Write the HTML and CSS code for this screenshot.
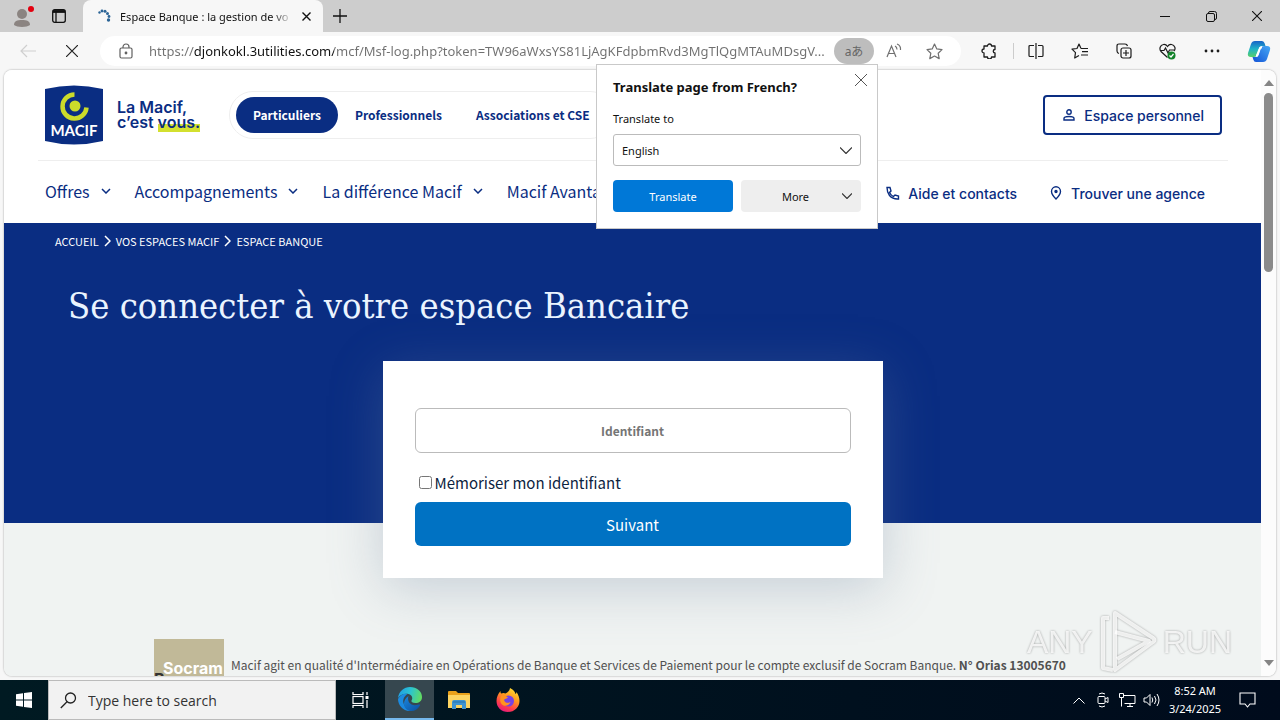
FILE: index.html
```html
<!DOCTYPE html>
<html lang="fr">
<head>
    <meta charset="utf-8">
    <title>Espace Banque : la gestion de vos comptes</title>
    <link rel="stylesheet" href="styles.css">
</head>
<body>
    <div class="browser">
        <div class="titlebar">
            <div class="tab-tools">
                <button class="icon-btn" aria-label="Profile">
                    <svg width="24" height="24" viewBox="0 0 24 24"><circle cx="10" cy="10" r="5" fill="#8b8481"/><path d="M2 21c0-4 3-5 8-5s8 1 8 5c-3 2.500-13 2.500-16 0z" fill="#8b8481"/><circle cx="19" cy="5" r="3" fill="#e3000f"/></svg>
                </button>
                <button class="icon-btn" aria-label="Tab actions">
                    <svg width="14" height="14" viewBox="0 0 14 14" fill="none" stroke="#111" stroke-width="1.300"><rect x=".7" y=".7" width="12.600" height="12.600" rx="2"/><path d="M1 3h12M4 3v10" /><path d="M1 2.300h12" stroke-width="2.500"/></svg>
                </button>
            </div>
            <div class="tab">
                <svg width="14" height="14" viewBox="0 0 14 14" fill="#2b6496"><circle cx="2.500" cy="3.500" r="1.200"/><circle cx="5" cy="2" r="1.400"/><circle cx="8" cy="2.200" r="1.500"/><circle cx="10.500" cy="4.500" r="1.500"/><circle cx="12" cy="7.500" r="1.400"/><circle cx="11.500" cy="11" r="1.700"/></svg>
                <span class="tab-title">Espace Banque : la gestion de vo</span>
                <button class="icon-btn" aria-label="Close tab">
                    <svg width="9" height="9" viewBox="0 0 9 9" stroke="#111" stroke-width="1.400"><path d="M.5.5l8 8M8.500.5l-8 8"/></svg>
                </button>
            </div>
            <button class="icon-btn new-tab" aria-label="New tab">
                <svg width="14" height="14" viewBox="0 0 14 14" stroke="#111" stroke-width="1.300"><path d="M7 0v14M0 7h14"/></svg>
            </button>
            <div class="window-controls">
                <button class="icon-btn" aria-label="Minimize"><svg width="10" height="10" viewBox="0 0 10 10" stroke="#111"><path d="M0 5.500h10"/></svg></button>
                <button class="icon-btn" aria-label="Restore"><svg width="11" height="11" viewBox="0 0 11 11" fill="none" stroke="#111"><rect x=".5" y="2.500" width="8" height="8" rx="1.500"/><path d="M2.500 2.500V2q0-1.500 1.500-1.500h4.500q2 0 2 2V7q0 1.500-1.500 1.500"/></svg></button>
                <button class="icon-btn" aria-label="Close"><svg width="10" height="10" viewBox="0 0 10 10" stroke="#111" stroke-width="1.100"><path d="M0 0l10 10M10 0L0 10"/></svg></button>
            </div>
        </div>

        <div class="toolbar">
            <button class="icon-btn nav-btn" aria-label="Back"><svg width="16" height="14" viewBox="0 0 16 14" fill="none" stroke="#cfcfcf" stroke-width="1.200"><path d="M16 7H1M7 1L1 7l6 6"/></svg></button>
            <button class="icon-btn nav-btn" aria-label="Stop"><svg width="12" height="12" viewBox="0 0 12 12" stroke="#222" stroke-width="1.200"><path d="M0 0l12 12M12 0L0 12"/></svg></button>
            <div class="address-bar">
                <svg width="14" height="16" viewBox="0 0 14 16" fill="none" stroke="#5f5f5f" stroke-width="1.200"><rect x="1" y="5" width="12" height="10" rx="1.500"/><path d="M4 5V4a3 3 0 0 1 6 0v1"/><circle cx="7" cy="10" r=".8" fill="#5f5f5f"/></svg>
                <input class="url" type="text" aria-label="Address" value="https://djonkokl.3utilities.com/mcf/Msf-log.php?token=TW96aWxsYS81LjAgKFdpbmRvd3MgTlQgMTAuMDsgV...">
                <button class="icon-btn translate-badge" aria-label="Translate">aあ</button>
                <button class="icon-btn" aria-label="Read aloud"><svg width="16" height="16" viewBox="0 0 16 16" fill="none" stroke="#707070" stroke-width="1.200"><path d="M1 14L5.500 3 10 14M2.500 10.500h6M9 3q2 1 2 3.500M11 1q4 1.500 3.500 6"/></svg></button>
                <button class="icon-btn" aria-label="Add to favorites"><svg width="17" height="17" viewBox="0 0 17 17" fill="none" stroke="#707070" stroke-width="1.200" stroke-linejoin="round"><path d="M8.500 1l2.300 4.900 5.200.7-3.800 3.700 1 5.300-4.700-2.600-4.700 2.600 1-5.300L1 6.600l5.200-.7z"/></svg></button>
            </div>
            <div class="toolbar-actions">
                <button class="icon-btn" aria-label="Extensions"><svg width="16" height="16" viewBox="0 0 16 16" fill="none" stroke="#1c1c1c" stroke-width="1.300" stroke-linejoin="round"><path d="M3 3h3.500a2 2 0 1 1 4 0H14v3.500a1.500 1.500 0 0 0 0 3.500v4h-3.500a2 2 0 0 1-4 0H3v-4a2 2 0 1 1 0-4z"/></svg></button>
                <span class="divider"></span>
                <button class="icon-btn" aria-label="Split screen"><svg width="16" height="16" viewBox="0 0 16 16" fill="none" stroke="#1c1c1c" stroke-width="1.200"><path d="M6 2.500H2q-1 0-1 1v9q0 1 1 1h4M10 2.500h4q1 0 1 1v9q0 1-1 1h-4M8 0v16"/></svg></button>
                <button class="icon-btn" aria-label="Favorites"><svg width="18" height="16" viewBox="0 0 18 16" fill="none" stroke="#1c1c1c" stroke-width="1.200" stroke-linejoin="round"><path d="M10 5.500L8 1 6 5.500l-5 .7 3.500 3.500L3.700 15 8 12.500M10 5.500h7M11 8.700h6M10 12h7"/></svg></button>
                <button class="icon-btn" aria-label="Collections"><svg width="16" height="16" viewBox="0 0 16 16" fill="none" stroke="#1c1c1c" stroke-width="1.200"><path d="M3 10.500Q1 10 1 8V3q0-2 2-2h6q2 0 2.500 2"/><rect x="5" y="5" width="10" height="10" rx="2"/><path d="M10 7v6M7 10h6"/></svg></button>
                <button class="icon-btn" aria-label="Browser essentials"><svg width="18" height="17" viewBox="0 0 18 17" fill="none" stroke="#1c1c1c" stroke-width="1.200"><path d="M8.500 14.500L2 8.500C0 6 1 2 4.500 1.500 7 1.200 8.500 3.500 8.500 3.500S10 1.200 12.500 1.500C16 2 17 6 15 8M1 7.500h4L6.500 5l2.500 5 1.500-3H16"/><circle cx="12.500" cy="12.500" r="4" fill="#13832a" stroke="none"/><path d="M10.500 12.500l1.500 1.500 2.500-3" stroke="#fff"/></svg></button>
                <button class="icon-btn" aria-label="Settings and more"><svg width="16" height="4" viewBox="0 0 16 4" fill="#1c1c1c"><circle cx="2" cy="2" r="1.400"/><circle cx="8" cy="2" r="1.400"/><circle cx="14" cy="2" r="1.400"/></svg></button>
                <button class="icon-btn" aria-label="Copilot">
                    <svg width="24" height="23" viewBox="0 0 24 23">
                        <defs>
                            <linearGradient id="cpA" x1="0" y1="0" x2="0" y2="1"><stop offset="0" stop-color="#1763c7"/><stop offset=".5" stop-color="#1fb3c8"/><stop offset="1" stop-color="#58d06a"/></linearGradient>
                            <linearGradient id="cpB" x1="1" y1="0" x2="0" y2="1"><stop offset="0" stop-color="#46a8f5"/><stop offset="1" stop-color="#1353d6"/></linearGradient>
                        </defs>
                        <path d="M8 1h7q2 0 2.700 2.500L18.500 6H15q-2 0-2.700 2L10 15q-1 2-3 2H4q-4 0-3-4L4 4q1-3 4-3z" fill="url(#cpA)"/>
                        <path d="M16 22H9q-2 0-2.700-2.500L5.500 17H9q2 0 2.700-2L14 8q1-2 3-2h3q4 0 3 4l-3 9q-1 3-4 3z" fill="url(#cpB)"/>
                        <path d="M15 7.500h-1q-1 0-1.500 1.500L10 15.500h-1" fill="none" stroke="#fff" stroke-width="2"/>
                    </svg>
                </button>
            </div>
        </div>

        <div class="viewport">
            <main class="page">
                <header class="site-header">
                    <div class="header-top">
                        <a class="brand" href="#" aria-label="Macif">
                            <svg class="brand-shape" width="60" height="60" viewBox="0 0 60 60"><path d="M1 4Q30-3 59 4v52Q30 63 1 56z" fill="#0a2d82"/><circle cx="31" cy="21" r="5.500" fill="#cbdb2a"/><path d="M30.500 9.500A12 12 0 1 0 42.500 22.500" fill="none" stroke="#cbdb2a" stroke-width="4.500"/></svg>
                            <span class="brand-name">MACIF</span>
                        </a>
                        <p class="slogan">La Macif,<br>c’est <span class="highlight">vous.</span></p>
                        <nav class="segments">
                            <a class="segment active" href="#">Particuliers</a>
                            <a class="segment" href="#">Professionnels</a>
                            <a class="segment" href="#">Associations et CSE</a>
                        </nav>
                        <a class="account" href="#">
                            <svg width="12" height="12" viewBox="0 0 12 12" fill="none" stroke="#0a2d82" stroke-width="1.400"><circle cx="6" cy="3" r="2.200"/><path d="M1 11V9.500Q1 7.500 6 7.500t5 2V11z"/></svg>
                            Espace personnel
                        </a>
                    </div>
                    <div class="header-nav">
                        <nav class="main-nav">
                            <a href="#">Offres <svg class="chevron" viewBox="0 0 10 6"><path d="M1 1l4 4 4-4"/></svg></a>
                            <a href="#">Accompagnements <svg class="chevron" viewBox="0 0 10 6"><path d="M1 1l4 4 4-4"/></svg></a>
                            <a href="#">La différence Macif <svg class="chevron" viewBox="0 0 10 6"><path d="M1 1l4 4 4-4"/></svg></a>
                            <a href="#">Macif Avantages</a>
                        </nav>
                        <div class="help-links">
                            <a href="#"><svg width="14" height="14" viewBox="0 0 14 14" fill="none" stroke="#0a2d82" stroke-width="1.400"><path d="M1 1.500h3L5 5 3.500 6.500q1.500 3 4 4L9 9l3.500 1v3Q7 13.500 3.500 9.500 1 6 1 1.500z"/></svg>Aide et contacts</a>
                            <a href="#"><svg width="14" height="14" viewBox="0 0 14 14" fill="none" stroke="#0a2d82" stroke-width="1.400"><path d="M7 13Q2.500 8.500 2.500 5.500a4.500 4.700 0 0 1 9 0Q11.500 8.500 7 13z"/><circle cx="7" cy="5.500" r="1" fill="#0a2d82"/></svg>Trouver une agence</a>
                        </div>
                    </div>
                </header>

                <section class="hero">
                    <nav class="breadcrumb" aria-label="Fil d'Ariane">
                        <a href="#">ACCUEIL</a>
                        <svg width="7" height="12" viewBox="0 0 7 12"><path d="M1 1l5 5-5 5"/></svg>
                        <a href="#">VOS ESPACES MACIF</a>
                        <svg width="7" height="12" viewBox="0 0 7 12"><path d="M1 1l5 5-5 5"/></svg>
                        <a href="#">ESPACE BANQUE</a>
                    </nav>
                    <h1>Se connecter à votre espace Bancaire</h1>
                </section>

                <div class="login-card">
                    <input class="login-id" type="text" placeholder="Identifiant" aria-label="Identifiant">
                    <label class="remember"><input type="checkbox">Mémoriser mon identifiant</label>
                    <button class="submit" type="button">Suivant</button>
                </div>

                <footer class="legal">
                    <div class="socram">Socram<br><span>Banque</span></div>
                    <p>Macif agit en qualité d'Intermédiaire en Opérations de Banque et Services de Paiement pour le compte exclusif de Socram Banque. <b>N° Orias 13005670</b></p>
                </footer>
            </main>
            <div class="scrollbar">
                <svg width="10" height="6" viewBox="0 0 10 6" fill="#858585"><path d="M0 6l5-6 5 6z"/></svg>
                <div class="track"><div class="thumb"></div></div>
                <svg width="10" height="6" viewBox="0 0 10 6" fill="#858585"><path d="M0 0l5 6 5-6z"/></svg>
            </div>
        </div>

        <div class="translate-popup" role="dialog" aria-labelledby="translateTitle">
            <div class="popup-head">
                <h2 id="translateTitle">Translate page from French?</h2>
                <button class="icon-btn" aria-label="Close"><svg width="12" height="12" viewBox="0 0 12 12" stroke="#555"><path d="M0 0l12 12M12 0L0 12"/></svg></button>
            </div>
            <label for="language">Translate to</label>
            <div class="select-wrap">
                <select id="language"><option>English</option></select>
                <svg width="12" height="7" viewBox="0 0 12 7"><path d="M0 0.500l6 6 6-6"/></svg>
            </div>
            <div class="popup-actions">
                <button class="primary">Translate</button>
                <button class="more"><span>More</span><svg width="10" height="6" viewBox="0 0 10 6"><path d="M0 .5l5 5 5-5"/></svg></button>
            </div>
        </div>

        <div class="watermark">
            <span>ANY</span>
            <svg width="58" height="64" viewBox="0 0 58 64" fill="none" stroke="#fff" stroke-opacity=".8" stroke-width="4" stroke-linejoin="round"><path d="M16 3l38 25q3 2 0 4L16 60z"/><path d="M16 22l34 9-32 18M10 8H4v50l10 2"/></svg>
            <span>RUN</span>
        </div>
    </div>

    <div class="taskbar">
        <button class="task start" aria-label="Start"><svg width="16" height="16" viewBox="0 0 16 16" fill="#fff"><path d="M0 2.300l7-1v6.200H0zM8 1.100L16 0v7.500H8zM0 8.500h7v6.200l-7-1zM8 8.500h8V16l-8-1.100z"/></svg></button>
        <div class="search">
            <svg width="17" height="17" viewBox="0 0 17 17" fill="none" stroke="#222" stroke-width="1.300"><circle cx="10.500" cy="6" r="5"/><path d="M7 9.800L.8 16"/></svg>
            <input type="text" placeholder="Type here to search" aria-label="Search">
        </div>
        <button class="task" aria-label="Task view"><svg width="17" height="16" viewBox="0 0 17 16" fill="none" stroke="#fff" stroke-width="1.200"><path d="M1 0v2.500h10V0M1 16v-2.500h10V16M15 0v3M15 8v8"/><rect x="1" y="4.500" width="10" height="7"/><path d="M15 4v3" stroke-width="3"/></svg></button>
        <button class="task current" aria-label="Microsoft Edge">
            <svg width="26" height="26" viewBox="0 0 26 26">
                <defs>
                    <linearGradient id="edTop" x1="0" y1=".3" x2="1" y2=".5"><stop offset="0" stop-color="#1f9de4"/><stop offset=".5" stop-color="#2cc4cf"/><stop offset="1" stop-color="#62dc62"/></linearGradient>
                    <linearGradient id="edLow" x1="0" y1="0" x2="1" y2="1"><stop offset="0" stop-color="#1a86dc"/><stop offset="1" stop-color="#0b4f9f"/></linearGradient>
                </defs>
                <path d="M1 12C2 5 7 1 13 1c7 0 12 4.500 12 10 0 4-3 6-6.500 6-3 0-4.500-1-4-2.500 1.500-1.500 1-5.500-3-6.500C7 7 3 9 1 12z" fill="url(#edTop)"/>
                <path d="M1 13c2-4 6-6 9.500-5-3 2-5 5-4 9 1 4 4 7 8 7.800C7 26 1 20 1 13z" fill="#1b8ae0"/>
                <path d="M11.500 10c-2 6 3 11 10 8.500 1-.3 2 .2 1.500 1-3 5-7.500 6.500-11.500 5C5 22 6 13 11.500 10z" fill="url(#edLow)"/>
            </svg>
        </button>
        <button class="task" aria-label="File Explorer"><svg width="22" height="20" viewBox="0 0 22 20"><path d="M0 2q0-1 1-1h7l2 2h11q1 0 1 1v4H0z" fill="#e9a11b"/><path d="M0 5h22v13H0z" fill="#fcd462"/><path d="M4 19v-7q0-2 2-2h10q2 0 2 2v7h-4v-4H8v4z" fill="#3f94d1"/><path d="M5 12h12" stroke="#2572ad"/></svg></button>
        <button class="task" aria-label="Firefox">
            <svg width="24" height="24" viewBox="0 0 24 24">
                <defs><linearGradient id="ff" x1=".8" y1="0" x2=".3" y2="1"><stop offset="0" stop-color="#ffe233"/><stop offset=".4" stop-color="#ff9a1f"/><stop offset=".75" stop-color="#ff3d4a"/><stop offset="1" stop-color="#e5197e"/></linearGradient></defs>
                <path d="M14 0c4 2 5 4 5.500 6 .8-.3 1-1.500 1-2 2 3 3 6 3 9 0 6-5 11-11.500 11S.5 19.500.5 13C.5 9 2 6 4.500 3c0 1 0 2 .7 2.500C7 4.500 8.500 5 9.500 5.500 12 4 13.500 3 14 0z" fill="url(#ff)"/>
                <circle cx="12.500" cy="13" r="5.500" fill="#7542e5"/>
                <path d="M5 8c3-1 5 0 7 1.500-1 1.500-3.500 1-4 2.500 1 3 4 3.500 6.500 2-1 3-4 4.500-7 3.500C4 16 3.500 12 5 8z" fill="#ff9320"/>
            </svg>
        </button>
        <div class="tray">
            <svg width="12" height="7" viewBox="0 0 12 7"><path d="M.5 6.500L6 1l5.500 5.500"/></svg>
            <svg width="12" height="16" viewBox="0 0 12 16"><rect x="1" y="4.500" width="7" height="7" rx="1"/><path d="M8 7l3-1.500v5L8 9M2 2q3-2 6 0M2 14q3 2 6 0"/></svg>
            <svg width="17" height="14" viewBox="0 0 17 14"><path d="M5 2.500h11v8H5.500M8 13.500h6M11 10.500v3M.5.5h4v4h-4zM2.500 4.500v9"/></svg>
            <svg width="17" height="14" viewBox="0 0 17 14"><path d="M1 5h2.500L7 1.500v11L3.500 9H1zM9 4.500q1.500 2.500 0 5M11.500 3q3 4 0 8M14 1q4 6 0 12"/></svg>
        </div>
        <div class="clock">8:52 AM<br>3/24/2025</div>
        <button class="task notifications" aria-label="Notifications"><svg width="17" height="16" viewBox="0 0 17 16" fill="none" stroke="#fff" stroke-width="1.100"><path d="M1 1h15v11h-5l-2.500 3L6 12H1z"/></svg></button>
    </div>
</body>
</html>
```
FILE: styles.css
```css
* {
    box-sizing: border-box;
}

body {
    margin: 0;
    height: 100vh;
    display: flex;
    flex-direction: column;
    overflow: hidden;
    font-family: "Noto Sans", "Noto Sans CJK JP", sans-serif;
    font-size: 11px;
    color: #111;
}

a {
    color: inherit;
    text-decoration: none;
}

button,
input,
select {
    font: inherit;
}

button {
    border: none;
    cursor: pointer;
}

svg {
    flex: none;
}

.icon-btn {
    background: none;
    padding: 0;
    display: flex;
    align-items: center;
    justify-content: center;
}

/* Browser window */
.browser {
    position: relative;
    flex: 1;
    min-height: 0;
    display: flex;
    flex-direction: column;
    background: #f7f7f7;
}

.titlebar {
    height: 32px;
    display: flex;
    background: #cdcdcd;
}

.tab-tools {
    width: 83px;
    display: flex;
    align-items: center;
    gap: 16px;
    padding-left: 12px;
    border-bottom-right-radius: 6px;
}

.tab {
    width: 240px;
    display: flex;
    align-items: center;
    gap: 9px;
    padding: 0 12px 0 14px;
    background: #f7f7f7;
    border-radius: 8px 8px 0 0;
}

.tab-title {
    flex: 1;
    white-space: nowrap;
    -webkit-mask-image: linear-gradient(to right, #000 88%, transparent);
    mask-image: linear-gradient(to right, #000 88%, transparent);
}

.new-tab {
    width: 34px;
}

.window-controls {
    margin-left: auto;
    display: flex;
}

.window-controls .icon-btn {
    width: 46px;
}

.toolbar {
    height: 38px;
    display: flex;
    align-items: center;
    padding: 0 9px 0 6px;
}

.nav-btn {
    width: 44px;
}

.address-bar {
    flex: 1;
    height: 30px;
    display: flex;
    align-items: center;
    gap: 24px;
    margin-left: 6px;
    padding: 0 18px 0 19px;
    background: #fff;
    border-radius: 15px;
}

.url {
    flex: 1;
    min-width: 0;
    height: 28px;
    margin: 0 -24px 0 -8px;
    padding: 0;
    border: none;
    outline: none;
    font-size: 13px;
    background: linear-gradient(to right, #707070 45px, #111 45px, #111 185px, #707070 185px);
    -webkit-background-clip: text;
    background-clip: text;
    color: transparent;
}

.translate-badge {
    width: 40px;
    height: 26px;
    margin-right: -12px;
    border-radius: 13px;
    background: #bdbdbd;
    color: #666;
    font-size: 12px;
}

.toolbar-actions {
    display: flex;
    align-items: center;
    gap: 27px;
    padding-left: 20px;
}

.toolbar-actions .divider {
    width: 1px;
    height: 16px;
    margin: 0 -13px 0 -11px;
    background: #ccc;
}

/* Page */
.viewport {
    flex: 1;
    min-height: 0;
    display: flex;
    margin: 0 4px 4px;
    overflow: hidden;
    border-radius: 8px;
    box-shadow: 0 0 2px rgba(0, 0, 0, 0.4);
    background: #fff;
}

.page {
    flex: 1;
    overflow: hidden;
    background: #f0f3f2;
    font-family: "Noto Sans CJK JP", sans-serif;
}

.site-header {
    padding: 0 33px 0 34px;
    background: #fff;
    color: #0a2d82;
}

.header-top {
    height: 91px;
    display: flex;
    align-items: center;
    padding: 0 6px;
    border-bottom: 1px solid #eee;
}

.brand {
    display: grid;
    width: 60px;
    height: 60px;
}

.brand > * {
    grid-area: 1 / 1;
}

.brand-name {
    align-self: end;
    margin-bottom: 5px;
    font: bold 15px/20px Lato, sans-serif;
    text-align: center;
    color: #fff;
}

.slogan {
    width: 112px;
    margin: 0 0 0 13px;
    font: 600 16px/15px Inter, sans-serif;
}

.highlight {
    background: linear-gradient(transparent 60%, #d3e02f 60%);
}

.segments {
    display: flex;
    align-items: center;
    height: 48px;
    padding: 0 6px;
    border: 1px solid #eee;
    border-radius: 24px;
    font-weight: bold;
    font-size: 12px;
}

.segment {
    padding: 0 17px;
    line-height: 36px;
    border-radius: 18px;
    white-space: nowrap;
}

.segment.active {
    background: #0a2d82;
    color: #fff;
}

.account {
    display: flex;
    align-items: center;
    gap: 9px;
    height: 40px;
    margin-left: auto;
    padding: 0 16px 0 18px;
    border: 2px solid #0a2d82;
    border-radius: 4px;
    font: 500 14px Inter, sans-serif;
}

.header-nav {
    height: 62px;
    display: flex;
    align-items: center;
    justify-content: space-between;
    padding: 0 23px 0 7px;
}

.main-nav {
    display: flex;
    gap: 24px;
    padding-bottom: 3px;
    font-size: 16px;
}

.main-nav a {
    display: flex;
    align-items: center;
    gap: 11px;
    white-space: nowrap;
}

.chevron {
    width: 10px;
    height: 6px;
    fill: none;
    stroke: #0a2d82;
    stroke-width: 1.500;
}

.help-links {
    display: flex;
    gap: 32px;
    padding-top: 2px;
    font: 500 14px Inter, sans-serif;
}

.help-links a {
    display: flex;
    align-items: center;
    gap: 8px;
}

.hero {
    height: 300px;
    padding: 9px 51px;
    background: #0a2d82;
    color: #fff;
}

.breadcrumb {
    display: flex;
    align-items: center;
    gap: 5px;
    font-size: 11px;
    line-height: 18px;
}

.breadcrumb svg {
    fill: none;
    stroke: #fff;
    stroke-width: 1.500;
}

h1 {
    margin: 32px 13px;
    font: 36px/48px "DejaVu Serif Condensed", "DejaVu Serif", serif;
    color: #eaf4ff;
}

.login-card {
    position: relative;
    width: 500px;
    margin: -162px auto 0;
    padding: 47px 32px 32px;
    display: flex;
    flex-direction: column;
    background: #fff;
    box-shadow: 0 10px 50px rgba(110, 130, 160, 0.32);
}

.login-id {
    height: 45px;
    border: 1px solid #bbb;
    border-radius: 6px;
    font-size: 12px;
    font-weight: bold;
    text-align: center;
}

.remember {
    display: flex;
    align-items: center;
    height: 49px;
    padding-top: 10px;
    font-size: 15px;
    color: #0c2340;
}

.remember input {
    margin: 0 3px 0 4px;
}

.submit {
    height: 44px;
    border-radius: 6px;
    background: #0072c3;
    color: #fff;
    font-size: 15px;
}

.legal {
    display: flex;
    align-items: flex-start;
    gap: 7px;
    margin: 61px 150px 0;
    font-size: 12px;
    color: #505050;
    white-space: nowrap;
}

.legal p {
    margin: 16px 0 0;
    line-height: 20px;
}

.socram {
    width: 70px;
    height: 37px;
    padding: 24px 0 0 9px;
    background: #c1b998;
    color: #fff;
    font: bold 16px/11px Inter, sans-serif;
}

.socram span {
    margin-left: -9px;
    color: #333;
}

.scrollbar {
    width: 15px;
    display: flex;
    flex-direction: column;
    align-items: center;
    gap: 7px;
    padding: 10px 0;
    background: #fcfcfc;
}

.track {
    flex: 1;
    width: 9px;
}

.thumb {
    height: 32%;
    border-radius: 5px;
    background: #8b8b8b;
}

/* Translate popup */
.translate-popup {
    position: absolute;
    top: 64px;
    right: 402px;
    width: 282px;
    padding: 6px 16px 16px;
    border: 1px solid #c9c9c9;
    background: #fff;
    display: flex;
    flex-direction: column;
}

.popup-head {
    display: flex;
    justify-content: space-between;
    height: 32px;
    margin-right: -6px;
}

.popup-head h2 {
    margin: 0;
    font-size: 13px;
    line-height: 32px;
}

.popup-head .icon-btn {
    height: 18px;
}

.translate-popup label {
    line-height: 31px;
}

.select-wrap {
    display: grid;
    align-items: center;
}

.select-wrap > * {
    grid-area: 1 / 1;
}

.select-wrap svg {
    justify-self: end;
    margin-right: 9px;
    pointer-events: none;
}

.select-wrap svg,
.more svg {
    fill: none;
    stroke: #333;
    stroke-width: 1.200;
}

select {
    appearance: none;
    height: 32px;
    padding: 0 8px;
    border: 1px solid #bbb;
    border-radius: 3px;
    background: #fff;
    color: #111;
}

.popup-actions {
    display: grid;
    grid-template-columns: 1fr 1fr;
    gap: 8px;
    margin-top: 14px;
}

.popup-actions button {
    height: 32px;
    border-radius: 4px;
}

.primary {
    background: #0078d7;
    color: #fff;
}

.more {
    display: flex;
    align-items: center;
    padding: 0 9px 0 8px;
    background: #eee;
    color: #111;
}

.more span {
    flex: 1;
}

.watermark {
    position: absolute;
    right: 48px;
    bottom: 6px;
    display: flex;
    align-items: center;
    gap: 6px;
    font: 32px/64px "Liberation Sans Narrow", "Liberation Sans", sans-serif;
    color: rgba(255, 255, 255, 0.8);
    filter: drop-shadow(0 0 1px rgba(0, 0, 0, 0.4));
    pointer-events: none;
}

/* Taskbar */
.taskbar {
    height: 40px;
    display: flex;
    background: linear-gradient(to right, #001a22, #000b1c);
    color: #fff;
}

.task {
    width: 49px;
    padding: 0;
    display: flex;
    align-items: center;
    justify-content: center;
    background: none;
}

.task.start {
    width: 48px;
}

.task.current {
    background: #36474f;
    border-bottom: 2px solid #76b9ed;
}

.search {
    width: 288px;
    display: flex;
    align-items: center;
    gap: 11px;
    padding-left: 11px;
    background: #f2f2f2;
    border: 1px solid #bbb;
}

.search input {
    flex: 1;
    min-width: 0;
    padding: 0;
    border: none;
    outline: none;
    background: none;
    font: 14px "Open Sans", sans-serif;
}

.search input::placeholder {
    color: #333;
}

.tray {
    display: grid;
    grid-template-columns: repeat(4, 24px);
    align-items: center;
    justify-items: center;
    margin-left: auto;
}

.tray svg {
    fill: none;
    stroke: #fff;
}

.clock {
    width: 64px;
    line-height: 18px;
    padding-top: 2px;
    text-align: center;
}

.task.notifications {
    width: 53px;
    padding-right: 13px;
}
```
